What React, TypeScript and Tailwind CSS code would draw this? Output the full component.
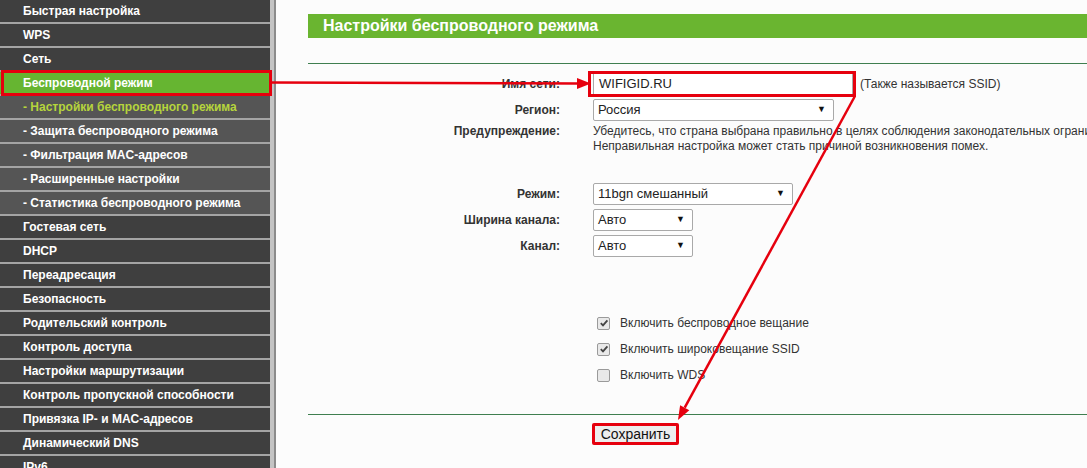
import React from "react";

const items: { t: string; kind: "main" | "sub" | "active" | "subactive" }[] = [
  { t: "Быстрая настройка", kind: "main" },
  { t: "WPS", kind: "main" },
  { t: "Сеть", kind: "main" },
  { t: "Беспроводной режим", kind: "active" },
  { t: "- Настройки беспроводного режима", kind: "subactive" },
  { t: "- Защита беспроводного режима", kind: "sub" },
  { t: "- Фильтрация MAC-адресов", kind: "sub" },
  { t: "- Расширенные настройки", kind: "sub" },
  { t: "- Статистика беспроводного режима", kind: "sub" },
  { t: "Гостевая сеть", kind: "main" },
  { t: "DHCP", kind: "main" },
  { t: "Переадресация", kind: "main" },
  { t: "Безопасность", kind: "main" },
  { t: "Родительский контроль", kind: "main" },
  { t: "Контроль доступа", kind: "main" },
  { t: "Настройки маршрутизации", kind: "main" },
  { t: "Контроль пропускной способности", kind: "main" },
  { t: "Привязка IP- и MAC-адресов", kind: "main" },
  { t: "Динамический DNS", kind: "main" },
  { t: "IPv6", kind: "main" },
];

function Row({ t, kind }: { t: string; kind: string }) {
  const bg =
    kind === "active"
      ? "bg-[#66b531]"
      : kind === "sub" || kind === "subactive"
      ? "bg-[#555555]"
      : "bg-[#3f3f3f]";
  const color = kind === "subactive" ? "text-[#b6d43c]" : "text-white";
  return (
    <div className="relative border-b-2 border-[#a4a4a4]">
      <div className={`h-[22px] flex items-center pl-[23px] ${bg} ${color} text-[12px] font-bold whitespace-nowrap`}>
        {t}
      </div>
      {kind === "active" && (
        <div className="absolute left-[1px] right-[-2px] top-[-2px] bottom-[-2px] border-[3px] border-[#e6000e]" />
      )}
    </div>
  );
}

function Select({ w, text }: { w: string; text: string }) {
  return (
    <div className={`${w} h-[22px] bg-white border border-[#a9a9a9] rounded-[2px] flex items-center justify-between pl-[4px] pr-[7px] text-[13px] text-[#222]`}>
      <span>{text}</span>
      <span className="text-[9px] text-[#111]">▼</span>
    </div>
  );
}

function Check({ on }: { on: boolean }) {
  return (
    <div className="w-[13px] h-[13px] border border-[#9a9a9a] rounded-[2px] bg-[#e9e9e9] flex items-center justify-center">
      {on && (
        <svg width="10" height="10" viewBox="0 0 10 10">
          <path d="M1.8 5.2 L4 7.4 L8.4 2.4" fill="none" stroke="#444" strokeWidth="1.8" />
        </svg>
      )}
    </div>
  );
}

export default function App() {
  return (
    <div
      className="relative w-[1087px] h-[468px] overflow-hidden flex bg-[#fcfcfc]"
      style={{ fontFamily: '"Liberation Sans", Arial, sans-serif' }}
    >
      <div className="w-[270px] shrink-0 bg-[#3f3f3f]">
        {items.map((it, i) => (
          <Row key={i} t={it.t} kind={it.kind} />
        ))}
      </div>
      <div className="w-[4px] shrink-0 bg-[#c4c4c4]" />
      <div className="w-[2px] shrink-0 bg-[#8c8c8c]" />
      <div className="flex-1 pl-[32px] pt-[14px] text-[#333]">
        <div className="h-[24px] bg-[#6ab530] flex items-center pl-[15px] text-white font-bold text-[16px] whitespace-nowrap">
          Настройки беспроводного режима
        </div>
        <div className="mt-[25px] h-px bg-[#3f7f50]" />
        <div className="mt-[9px] flex flex-col">
          <div className="flex items-center h-[22px]">
            <div className="w-[252px] text-right text-[12px] font-bold">Имя сети:</div>
            <div className="relative ml-[33px] w-[260px] h-[22px] bg-white border border-[#a9a9a9] flex items-center pl-[5px] text-[13px] text-[#222]">
              WIFIGID.RU
              <div className="absolute left-[-6px] right-[-4px] top-[-3px] bottom-[-3px] border-[3px] border-[#e6000e]" />
            </div>
            <div className="ml-[7px] text-[12px] text-[#333] whitespace-nowrap">(Также называется SSID)</div>
          </div>
          <div className="flex items-center h-[22px] mt-[4px]">
            <div className="w-[252px] text-right text-[12px] font-bold">Регион:</div>
            <div className="ml-[33px]">
              <Select w="w-[241px]" text="Россия" />
            </div>
          </div>
          <div className="flex items-start mt-[3px]">
            <div className="w-[252px] text-right text-[12px] font-bold leading-[15px]">Предупреждение:</div>
            <div className="ml-[33px] text-[12px] leading-[15px] whitespace-nowrap">
              <div>Убедитесь, что страна выбрана правильно в целях соблюдения законодательных ограничений.</div>
              <div>Неправильная настройка может стать причиной возникновения помех.</div>
            </div>
          </div>
          <div className="flex items-center h-[22px] mt-[29px]">
            <div className="w-[252px] text-right text-[12px] font-bold">Режим:</div>
            <div className="ml-[33px]">
              <Select w="w-[200px]" text="11bgn смешанный" />
            </div>
          </div>
          <div className="flex items-center h-[22px] mt-[4px]">
            <div className="w-[252px] text-right text-[12px] font-bold">Ширина канала:</div>
            <div className="ml-[33px]">
              <Select w="w-[100px]" text="Авто" />
            </div>
          </div>
          <div className="flex items-center h-[22px] mt-[4px]">
            <div className="w-[252px] text-right text-[12px] font-bold">Канал:</div>
            <div className="ml-[33px]">
              <Select w="w-[100px]" text="Авто" />
            </div>
          </div>
          <div className="mt-[53px] pl-[289px] flex flex-col text-[12px]">
            {[
              { on: true, t: "Включить беспроводное вещание" },
              { on: true, t: "Включить широковещание SSID" },
              { on: false, t: "Включить WDS" },
            ].map((c, i) => (
              <div key={i} className="h-[26px] flex items-center">
                <Check on={c.on} />
                <span className="ml-[10px]">{c.t}</span>
              </div>
            ))}
          </div>
          <div className="mt-[26px] h-px bg-[#3f7f50]" />
          <div className="mt-[8px] pl-[284px]">
            <button className="h-[22px] w-[87px] justify-center bg-[#ededed] border-[3px] border-[#e6000e] rounded-[2px] text-[14px] text-[#111] leading-none flex items-center">
              Сохранить
            </button>
          </div>
        </div>
      </div>
      <svg className="absolute inset-0 pointer-events-none" width="1087" height="468">
        <line x1="270" y1="82.5" x2="579" y2="83.5" stroke="#e6000e" strokeWidth="2.5" />
        <polygon points="591,83.5 577,78 577,89" fill="#e6000e" />
        <line x1="855" y1="96" x2="684.7" y2="407.7" stroke="#e6000e" strokeWidth="2.5" />
        <polygon points="678,420 689.3,410.2 680.1,405.2" fill="#e6000e" />
      </svg>
    </div>
  );
}
